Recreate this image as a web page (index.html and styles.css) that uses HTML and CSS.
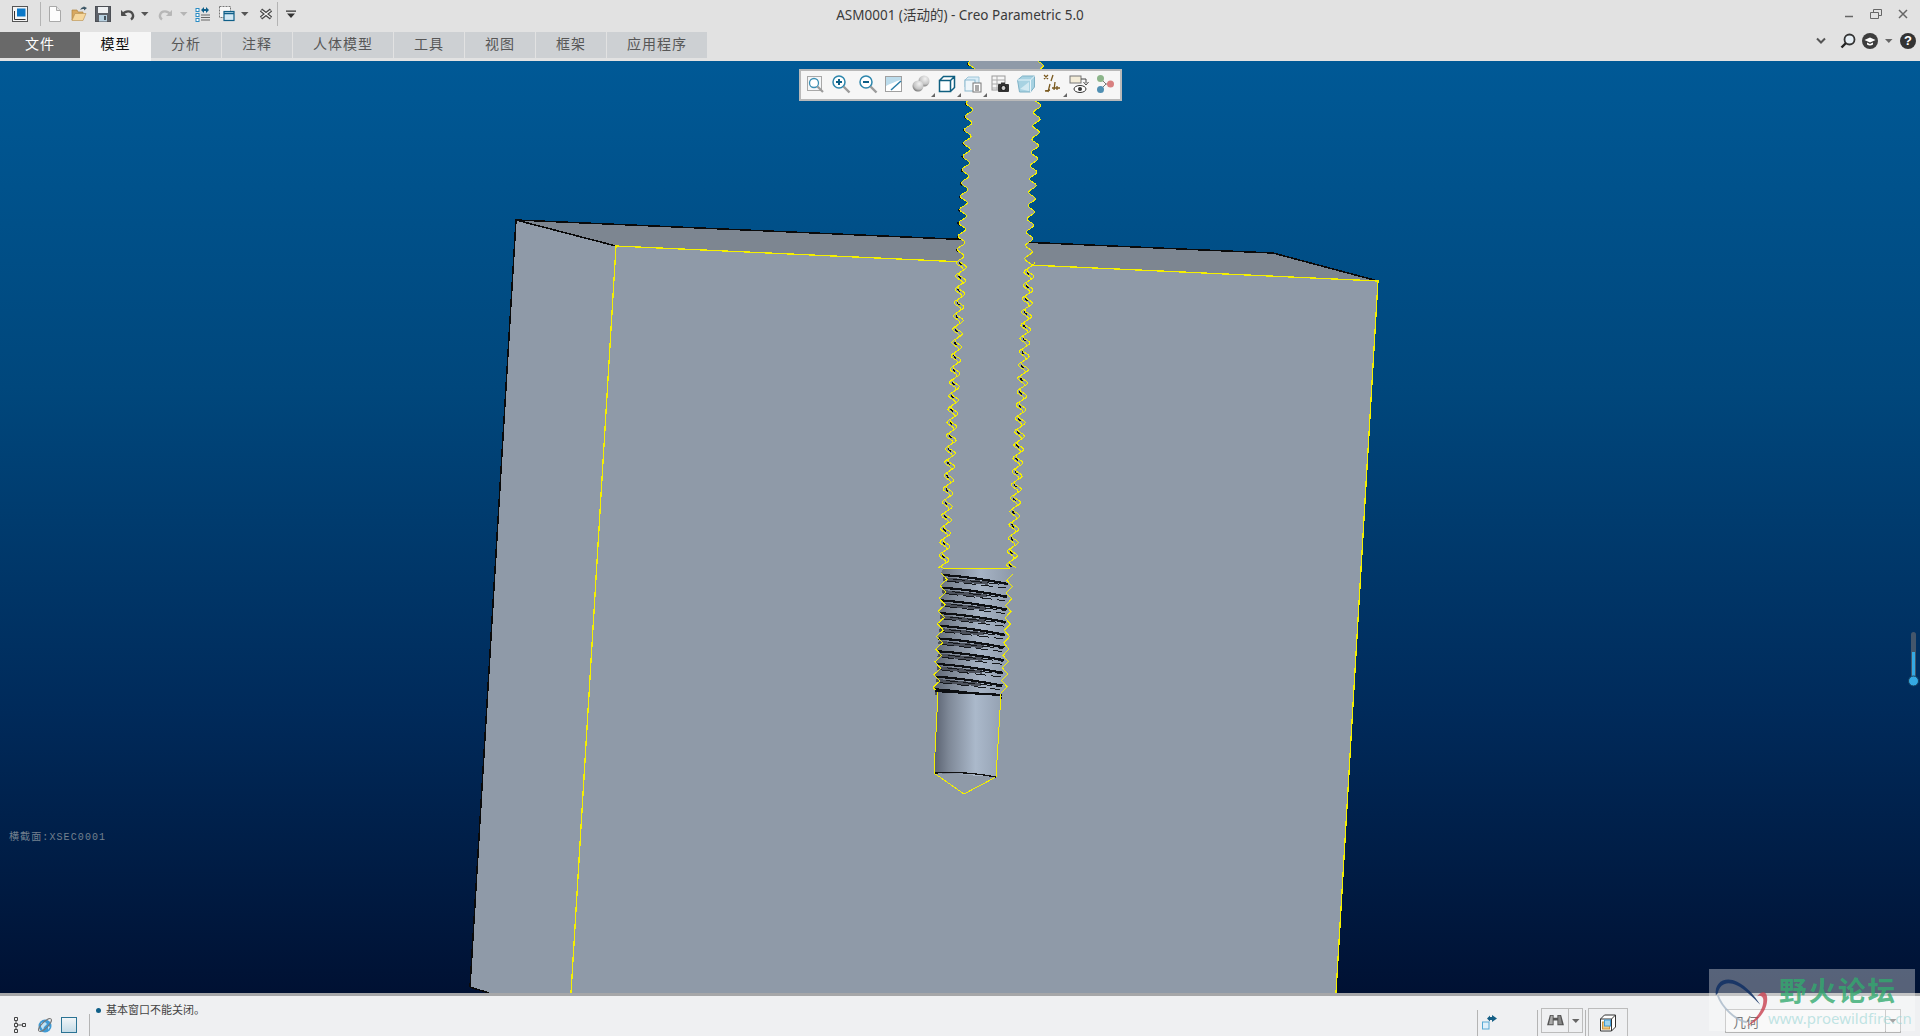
FILE: index.html
```html
<!DOCTYPE html>
<html lang="zh">
<head>
<meta charset="utf-8">
<title>ASM0001 (活动的) - Creo Parametric 5.0</title>
<link rel="stylesheet" href="styles.css">
</head>
<body>
<header class="chrome">
  <div class="titlebar">
    <div class="qat">
      <svg class="qi app" viewBox="0 0 16 16"><rect x=".5" y=".5" width="15" height="15" fill="#f4f4f4" stroke="#555"/><rect x="5" y="2.500" width="8.500" height="8" fill="#0a78c8"/><path d="M2.500 5v8.500h11" fill="none" stroke="#333" stroke-width="1"/></svg>
      <span class="sep sep-a"></span>
      <svg class="qi" viewBox="0 0 16 16"><path d="M2.500.5h7l4 4v11h-11z" fill="#fdfdfd" stroke="#a9a9a9"/><path d="M9.500.5v4h4" fill="#e4e4e4" stroke="#a9a9a9"/></svg>
      <svg class="qi" viewBox="0 0 16 16"><path d="M1 14V4h5l1 2h5v2H4z" fill="#d8a860" stroke="#b08440" stroke-width=".7"/><path d="M1 14.500l3-7h11l-3 7z" fill="#f6d79c" stroke="#c09a5c" stroke-width=".7"/><path d="M9 4c1-2 2-3 4-3l-1-1 4 2-3 2.500V3c-1.500 0-3 .2-4 1z" fill="#3d5666"/></svg>
      <svg class="qi" viewBox="0 0 16 16"><rect x=".5" y=".5" width="15" height="15" fill="#5d6168" stroke="#4c4f55"/><rect x="3" y="1" width="10" height="6" fill="#eef0f2"/><rect x="4" y="9" width="8" height="6.500" fill="#b7d0e0"/><rect x="9" y="10" width="2" height="4" fill="#44525c"/></svg>
      <svg class="qi" viewBox="0 0 16 16"><path d="M2.500 4.500v5h5" fill="#4d4d4d" stroke="#4d4d4d" stroke-width="1"/><path d="M3.500 8.500C6 4.500 12.500 4 14 9c.4 2-.5 3.500-2 4.500" fill="none" stroke="#4d4d4d" stroke-width="2.400"/></svg>
      <svg class="qa" viewBox="0 0 10 16"><path d="M1 6h7.500L4.800 10z" fill="#555"/></svg>
      <svg class="qi redo" viewBox="0 0 16 16"><path d="M13.500 4.500v5h-5" fill="#b7b7b7" stroke="#b7b7b7" stroke-width="1"/><path d="M12.500 8.500C10 4.500 3.500 4 2 9c-.4 2 .5 3.500 2 4.500" fill="none" stroke="#b7b7b7" stroke-width="2.400"/></svg>
      <svg class="qa" viewBox="0 0 10 16"><path d="M1 6h7.500L4.800 10z" fill="#b5b5b5"/></svg>
      <svg class="qi regen" viewBox="0 0 16 16"><g fill="#fff" stroke="#2b8cc4"><rect x="1" y="2.500" width="3" height="3"/><rect x="1" y="7.500" width="3" height="3"/><rect x="1" y="12.500" width="3" height="3"/></g><path d="M6 9h9M6 11.500h9M6 14h9" stroke="#666" stroke-width="1"/><path d="M6 4l3-3v2h2V1l3 3-3 3V5H9v2z" fill="#0e5f8a"/></svg>
      <svg class="qi" viewBox="0 0 16 16"><rect x=".5" y=".5" width="11" height="11" fill="#f6f6f6" stroke="#777" stroke-dasharray="2 1"/><rect x="5" y="5.500" width="10" height="9" fill="#d2e8f4" stroke="#0f5f88" stroke-width="1.200"/><path d="M5 7.500h10" stroke="#0f5f88" stroke-width="1.500"/></svg>
      <svg class="qa" viewBox="0 0 10 16"><path d="M1 6h7.500L4.800 10z" fill="#555"/></svg>
      <svg class="qi closer" viewBox="0 0 16 16"><path d="M3 4l10 8M13 4L3 12" stroke="#444" stroke-width="3.600"/><path d="M3.500 4.400l9 7.200M12.500 4.400l-9 7.200" stroke="#f4f4f4" stroke-width="1.300"/></svg>
      <span class="sep sep-b"></span>
      <svg class="qa more" viewBox="0 0 10 16"><path d="M0 4.500h10v1.200H0zM1 7.500h8L5 12z" fill="#333"/></svg>
    </div>
    <div class="title">ASM0001 (活动的) - Creo Parametric 5.0</div>
    <div class="winctl">
      <svg class="wc" viewBox="0 0 12 12"><path d="M2 8.500h8" stroke="#666" stroke-width="1.500"/></svg>
      <svg class="wc" viewBox="0 0 12 12"><path d="M.5 4.500h8v6h-8zM3.500 4.500v-3h8v6h-3" fill="none" stroke="#666"/></svg>
      <svg class="wc" viewBox="0 0 12 12"><path d="M2 2l8 8M10 2l-8 8" stroke="#666" stroke-width="1.500"/></svg>
    </div>
  </div>
  <div class="ribbonbar">
    <nav class="tabs">
      <span class="tab tab-file">文件</span>
      <span class="tab tab-active">模型</span>
      <span class="tab">分析</span>
      <span class="tab">注释</span>
      <span class="tab">人体模型</span>
      <span class="tab">工具</span>
      <span class="tab">视图</span>
      <span class="tab">框架</span>
      <span class="tab">应用程序</span>
    </nav>
    <div class="helpers">
      <svg class="chev" viewBox="0 0 10 8"><path d="M1 1.500l4 4 4-4" fill="none" stroke="#555" stroke-width="2"/></svg>
      <svg class="h16" viewBox="0 0 16 16"><circle cx="9.500" cy="6.500" r="5" fill="#e6eef4" stroke="#333" stroke-width="1.800"/><path d="M6 10l-4.500 4.500" stroke="#222" stroke-width="2.400"/></svg>
      <svg class="h16" viewBox="0 0 16 16"><circle cx="8" cy="8" r="8" fill="#3d3d3d"/><path d="M2.500 7L8 4.500 13.500 7 8 9.500z" fill="#fff"/><path d="M5 9.500v2c2 1.300 4 1.300 6 0v-2L8 11z" fill="#fff"/></svg>
      <svg class="qa" viewBox="0 0 10 16"><path d="M1 6h7.500L4.800 10z" fill="#666"/></svg>
      <span class="help">?</span>
    </div>
  </div>
</header>

<main class="viewport">
  <svg class="scene" id="scene" viewBox="0 61 1920 932" xmlns="http://www.w3.org/2000/svg">
    <defs>
      <linearGradient id="threadBody" x1="0" x2="1" y1="0" y2="0">
        <stop offset="0" stop-color="#5b6370"/><stop offset=".25" stop-color="#808a98"/><stop offset=".6" stop-color="#a6b3c4"/><stop offset="1" stop-color="#8d99a9"/>
      </linearGradient>
      <linearGradient id="cylBody" x1="0" x2="1" y1="0" y2="0">
        <stop offset="0" stop-color="#596170"/><stop offset=".22" stop-color="#7e8897"/><stop offset=".62" stop-color="#abb9cb"/><stop offset="1" stop-color="#95a2b3"/>
      </linearGradient>
    </defs>
    <g class="crisp">
      <polygon class="face" points="516,220 470,987 489,993 571,993 616,246"/>
      <polygon class="face" points="616,246 1378,281 1336,993 571,993"/>
      <polygon class="topface" points="516,220 1273,253 1378,281 616,246"/>
      <polyline class="ink" points="470,987 516,220 1273,253 1378,281"/>
      <line class="ink" x1="516" y1="220" x2="616" y2="246"/>
      <line class="ink" x1="470" y1="987" x2="489" y2="993"/>
      <polyline class="edge" points="571,993 616,246 1378,281 1336,993"/>
    </g>
    <g id="bolt" class="crisp"></g>
    <text class="seclabel" x="9" y="840">横截面:XSEC0001</text>
    <g class="slider">
      <rect class="track" x="1911" y="632" width="5" height="50" rx="2.500"/>
      <rect class="level" x="1912" y="652" width="3" height="28"/>
      <circle class="knob" cx="1913.500" cy="681" r="5"/>
    </g>
  </svg>

  <div class="viewbar">
    <svg class="vi" viewBox="0 0 20 20"><rect x="2.500" y="2.500" width="14" height="14" fill="#f4f6f8" stroke="#a8a8a8"/><circle cx="9" cy="9" r="4.500" fill="#fff" stroke="#3b8fb4" stroke-width="1.300"/><path d="M12.500 12.500l5.500 5.500" stroke="#9b9b9b" stroke-width="2.200"/></svg>
    <svg class="vi" viewBox="0 0 20 20"><circle cx="8" cy="8" r="6" fill="#fff" stroke="#2d86ac" stroke-width="1.500"/><path d="M5 8h6M8 5v6" stroke="#0d5f86" stroke-width="2"/><path d="M12.500 12.500l6 6" stroke="#9b9b9b" stroke-width="2.400"/></svg>
    <svg class="vi" viewBox="0 0 20 20"><circle cx="8" cy="8" r="6" fill="#fff" stroke="#2d86ac" stroke-width="1.500"/><path d="M5 8h6" stroke="#0d5f86" stroke-width="2"/><path d="M12.500 12.500l6 6" stroke="#9b9b9b" stroke-width="2.400"/></svg>
    <svg class="vi" viewBox="0 0 20 20"><rect x="1.500" y="2.500" width="16" height="15" fill="#fff" stroke="#a0a0a0"/><path d="M2 3h15v3C12 7 6 10 2 12z" fill="#bcdcec"/><path d="M7 16L17 7" stroke="#2a7da8" stroke-width="1.500"/></svg>
    <span class="vslot"><svg class="vi" viewBox="0 0 20 20"><defs><radialGradient id="sph" cx=".6" cy=".3" r=".8"><stop offset="0" stop-color="#f2f2f2"/><stop offset=".6" stop-color="#c4c4c4"/><stop offset="1" stop-color="#5a5a5a"/></radialGradient></defs><circle cx="13" cy="7" r="5.500" fill="url(#sph)"/><circle cx="7" cy="12" r="5.500" fill="url(#sph)"/></svg><i class="corner"></i></span>
    <span class="vslot"><svg class="vi" viewBox="0 0 20 20"><path d="M2.500 6.500h11v11h-11zM2.500 6.500l4-4h11v11l-4 4M13.500 6.500l4-4" fill="#fff" stroke="#0f5f80" stroke-width="1.500"/></svg><i class="corner"></i></span>
    <span class="vslot"><svg class="vi" viewBox="0 0 20 20"><path d="M2 6l3-3h11v10H2z" fill="#d8ecf6" stroke="#9fc6d8"/><rect x="2" y="6" width="10" height="11" fill="#eef6fa" stroke="#8bb9cf"/><rect x="10" y="9" width="8" height="9" fill="#fff" stroke="#777"/><path d="M12 12h4M12 14h4M12 16h4" stroke="#555"/></svg><i class="corner"></i></span>
    <svg class="vi" viewBox="0 0 20 20"><rect x="2" y="2" width="13" height="14" fill="#f6f6f6" stroke="#999"/><path d="M2 6h13M2 10h13M2 14h13M7 2v14" stroke="#aaa"/><rect x="8" y="10" width="11" height="8" rx="1" fill="#333"/><circle cx="13.500" cy="14" r="2.500" fill="#ccc" stroke="#111"/><rect x="11" y="8.500" width="4" height="2" fill="#333"/></svg>
    <svg class="vi" viewBox="0 0 20 20"><path d="M1.500 6l5-4h12v11l-4 5h-11z" fill="#a7d2e2" stroke="#7fb2c6"/><path d="M1.500 6h13l4-4M14.500 6v12" fill="none" stroke="#e6f4fa"/><path d="M4 15l9-7v9z" fill="#d2e9f2"/></svg>
    <span class="vslot"><svg class="vi" viewBox="0 0 20 20"><g stroke="#7a5a20" stroke-width="1.300" fill="none"><path d="M1 1l4 4M5 1L1 5M10 1L8 7M7 10l-2 8M12 8l-1 8M9 14h8M14 12v4M2 17l5-1"/></g></svg><i class="corner"></i></span>
    <svg class="vi" viewBox="0 0 20 20"><rect x="1" y="2" width="11" height="7" fill="#f3ecd8" stroke="#777"/><path d="M12 5h5v4M14.500 8l2.500 3 2.500-3" fill="none" stroke="#444"/><ellipse cx="11" cy="15" rx="6" ry="3.500" fill="#fff" stroke="#333"/><circle cx="11" cy="15" r="2" fill="#333"/></svg>
    <svg class="vi" viewBox="0 0 20 20"><path d="M6 5l5 5-5 5M11 10h5" fill="none" stroke="#777"/><circle cx="5.500" cy="4.500" r="3.500" fill="#8cb58a"/><circle cx="5.500" cy="15.500" r="3.500" fill="#4f8fb3"/><circle cx="15.500" cy="10" r="3.500" fill="#d88080"/></svg>
  </div>
</main>

<footer class="status">
  <div class="st-left">
    <svg class="st16" viewBox="0 0 16 16"><path d="M2.500 .5h3v3h-3zM2.500 6.500h3v3h-3zM2.500 12.500h3v3h-3zM10.500 6.500h3v3h-3zM4 3.500v3M4 9.500v3M5.500 8h5" fill="none" stroke="#444"/></svg>
    <svg class="st16" viewBox="0 0 16 16"><circle cx="8" cy="9" r="6.500" fill="#3f9ad4"/><path d="M4 6l4-1 2 2-3 3-1 3-2-3zM11 9l2 1-2 3z" fill="#bfe2f5"/><ellipse cx="8" cy="8" rx="8.500" ry="3" transform="rotate(-45 8 8)" fill="none" stroke="#777"/></svg>
    <svg class="st16" viewBox="0 0 16 16"><defs><linearGradient id="pane" x1="0" x2="0" y1="0" y2="1"><stop offset="0" stop-color="#f3f6f8"/><stop offset="1" stop-color="#c3dbe7"/></linearGradient></defs><rect x=".5" y=".5" width="15" height="15" fill="url(#pane)" stroke="#2b7394"/></svg>
  </div>
  <div class="message"><i class="dot"></i><span>基本窗口不能关闭。</span></div>
  <div class="st-right">
    <svg class="st16 regen-s" viewBox="0 0 16 16"><rect x=".5" y="8" width="6.500" height="7" fill="#dff0fa" stroke="#58a9d4"/><path d="M5 4.500L8 1.500V3h2V1l5 3.500L10 8V6H8v1.500z" fill="#155f86"/></svg>
    <div class="filterbox binoc">
      <span class="bcell"><svg class="st-bin" viewBox="0 0 18 16"><path d="M3 2h4v3h4V2h4l3 11h-7V8H7v5H0z" fill="#555"/><path d="M4 3h2v9H2z" fill="#aaa"/><path d="M12 3h2l2 9h-4z" fill="#888"/></svg></span>
      <span class="arrowcell"><svg class="qa" viewBox="0 0 10 16"><path d="M1 6h7.500L4.800 10z" fill="#666"/></svg></span>
    </div>
    <div class="cubebtn"><svg class="st-cube" viewBox="0 0 18 18"><path d="M1.500 5l4-4h11v12l-4 4h-11z" fill="#fff" stroke="#333"/><path d="M1.500 5h11v12M12.500 5l4-4" fill="none" stroke="#333"/><rect x="3.500" y="8" width="7" height="7" fill="#f0c77e" stroke="#c9923e"/><rect x="5.500" y="6" width="6" height="6" fill="#9fd4ef" stroke="#3f9ad4"/></svg></div>
    <div class="selectbox"><span class="selval">几何</span><span class="arrowcell selarrow"><svg class="qa" viewBox="0 0 10 16"><path d="M1 6h7.500L4.800 10z" fill="#777"/></svg></span></div>
  </div>
</footer>

<aside class="watermark">
  <svg class="wm-logo" viewBox="0 0 60 60">
    <path d="M4 24C2 10 14 4 26 10c10 5 18 14 24 24-8-8-16-16-24-20C16 9 8 12 6 22z" fill="#0f2f63" opacity=".85"/>
    <path d="M6 24c4 12 18 26 30 28" fill="none" stroke="#a8b8c8" stroke-width="2" opacity=".8"/>
    <path d="M46 26c6-8 12-6 11 4-1 12-11 22-21 26 10-8 18-18 17-28-1-4-5-4-7-2z" fill="#c8404f" opacity=".8"/>
  </svg>
  <div class="wm-cn">野火论坛</div>
  <div class="wm-url">www.proewildfire.cn</div>
</aside>
<script src="script.js"></script>
</body>
</html>
```
FILE: styles.css
```css
* { box-sizing: border-box; }
html, body { margin: 0; height: 100%; overflow: hidden; }
body {
  display: flex;
  flex-direction: column;
  height: 1036px;
  position: relative;
  font-family: "Noto Sans", "Noto Sans CJK SC", sans-serif;
  background: #e2e2e2;
}
svg { display: block; flex: none; }

/* window chrome */
.chrome { height: 61px; flex: none; background: #e2e2e2; display: flex; flex-direction: column; }
.titlebar { height: 32px; display: grid; grid-template-columns: 1fr auto 1fr; align-items: start; }
.qat { display: flex; align-items: center; gap: 8px; padding: 4px 0 0 12px; height: 24px; }
.qi { width: 16px; height: 16px; }
.qa { width: 10px; height: 16px; }
.qat .qa { margin-left: -3px; margin-right: -1px; }
.redo { margin-left: 1px; }
.regen { margin-left: -1px; }
.closer { margin-left: 1px; }
.app { margin-right: 4px; }
.sep { width: 1px; height: 24px; background: #b4b4b4; }
.sep-a { margin-right: -2px; }
.sep-b { margin-left: -5px; }
.qat .more { margin-left: 0; }
.title { font-size: 13.500px; line-height: 16px; padding-top: 7px; color: #3a3a3a; white-space: nowrap; }
.winctl { display: flex; justify-content: flex-end; gap: 15px; padding: 8px 11px 0 0; }
.wc { width: 12px; height: 12px; }

.ribbonbar { height: 26px; display: flex; justify-content: space-between; }
.tabs { display: flex; gap: 1px; align-items: stretch; }
.tab {
  padding: 0 20px;
  background: #cdd0d3;
  color: #575757;
  font-size: 14px;
  letter-spacing: 1px;
  line-height: 24px;
  white-space: nowrap;
}
.tab-file { width: 80px; background: #696969; color: #fff; margin-right: -1px; text-align: center; padding: 0; }
.tab-active { width: 71px; background: #f6f6f6; color: #111; margin-right: -1px; height: 29px; padding: 0; text-align: center; }
.helpers { display: flex; align-items: center; gap: 6px; padding: 0 4px 8px 0; }
.chev { width: 10px; height: 8px; margin-right: 8px; }
.h16 { width: 16px; height: 16px; }
.help {
  width: 16px; height: 16px; border-radius: 50%;
  background: #333; color: #fff;
  font: 700 13px/16px "Liberation Sans", sans-serif;
  text-align: center;
}

/* 3D viewport */
.viewport {
  flex: 1;
  position: relative;
  min-height: 0;
  background: linear-gradient(180deg, #005996 0%, #00477c 35%, #002a5a 70%, #001133 100%);
}
.scene { width: 1920px; height: 932px; }
.crisp { shape-rendering: crispEdges; }
.face { fill: #8f9aa8; }
.topface { fill: #7d8691; }
.ink { fill: none; stroke: #0a0a0a; stroke-width: 1.500; }
.edge { fill: none; stroke: #f4f000; stroke-width: 1.300; }
.boltfill { fill: #8f9aa8; }
.wave { fill: none; stroke: #f4f000; stroke-width: 1; }
.fleck { fill: none; stroke: #111; stroke-width: 1.300; }
.threadfill { fill: url(#threadBody); }
.cyl { fill: url(#cylBody); }
.cone { fill: #8f9aa8; }
.helix { fill: none; stroke: #0d0f12; stroke-width: 2.200; }
.helix-band { fill: none; stroke: #4d525c; stroke-width: 3.500; }
.helix-thin { fill: none; stroke: #15181c; stroke-width: 1; stroke-dasharray: 12 5; }
.seclabel { font: 10px "Liberation Mono", "Noto Sans CJK SC", monospace; letter-spacing: 1.100px; fill: #74818f; }
.track { fill: #43566b; }
.level, .knob { fill: #35a9e2; }
.knob { stroke: #16405f; stroke-width: 1; }

.viewbar {
  position: absolute;
  left: 799px;
  top: 8px;
  width: 323px;
  height: 32px;
  background: #f6f6f6;
  border: 2px solid #b9b9b9;
  display: flex;
  align-items: center;
  gap: 6.400px;
  padding: 0 4px 2px;
}
.vi { width: 20px; height: 20px; }
.vslot { position: relative; display: block; width: 20px; height: 20px; flex: none; }
.corner {
  position: absolute; right: -4px; bottom: -3px;
  width: 0; height: 0;
  border-left: 4px solid transparent;
  border-bottom: 4px solid #666;
}

/* status bar */
.status {
  height: 43px;
  flex: none;
  background: #eff0f2;
  border-top: 3px solid #a6a7a9;
  display: flex;
  align-items: flex-start;
}
.st-left {
  width: 90px;
  height: 40px;
  display: flex;
  align-items: flex-end;
  gap: 8.500px;
  padding: 0 0 3px 12px;
  position: relative;
}
.st-left::after { content: ""; position: absolute; right: 0; top: 18px; bottom: 0; width: 1px; background: #b4b4b4; }
.st16 { width: 16px; height: 16px; }
.message { display: flex; align-items: center; gap: 5px; padding: 6px 0 0 6px; font-size: 11px; line-height: 16px; color: #444; }
.dot { width: 5px; height: 5px; border-radius: 50%; background: #0f5f88; }
.st-right {
  margin-left: auto;
  display: flex;
  align-items: flex-start;
  width: 443px;
  height: 40px;
  position: relative;
  background: linear-gradient(#b4b4b4, #b4b4b4) 0 14px / 1px 100% no-repeat;
}
.regen-s { margin: 18px 0 0 5px; }
.filterbox {
  display: flex;
  margin: 12px 0 0 43px;
  width: 42px; height: 25px;
  border: 1px solid #bcbcbc;
}
.st-right::before, .st-right::after { content: ""; position: absolute; top: 14px; bottom: 0; width: 1px; background: #b4b4b4; }
.st-right::before { left: 60px; }
.st-right::after { left: 108px; }
.bcell { width: 27px; display: flex; align-items: center; justify-content: center; border-right: 1px solid #bcbcbc; }
.st-bin { width: 17px; height: 15px; }
.arrowcell { flex: 1; display: flex; align-items: center; justify-content: center; }
.cubebtn {
  margin: 12px 0 0 5px;
  width: 40px; height: 28px;
  border: 1px solid #bcbcbc;
  border-bottom: 0;
  display: flex; align-items: center; justify-content: center;
}
.st-cube { width: 18px; height: 18px; }
.selectbox {
  margin: 13px 0 0 97px;
  width: 176px; height: 24px;
  border: 1px solid #b4b4b4;
  background: #f6f6f6;
  display: flex;
}
.selval { flex: 1; padding-left: 7px; font-size: 13px; line-height: 24px; color: #333; }
.selarrow { flex: none; width: 15px; border-left: 1px solid #b4b4b4; }

/* forum watermark overlay */
.watermark {
  position: absolute;
  left: 1709px;
  top: 969px;
  width: 206px;
  height: 62px;
  background: rgba(255, 255, 255, .34);
}
.wm-logo { position: absolute; left: 2px; top: 3px; width: 60px; height: 58px; }
.wm-cn {
  position: absolute; left: 70px; top: 2px;
  font: 700 27.500px/36px "Noto Sans CJK SC", sans-serif;
  letter-spacing: 2px;
  color: rgba(50, 170, 110, .8);
  white-space: nowrap;
}
.wm-url {
  position: absolute; left: 59px; top: 37px;
  font: 400 15px/24px "Noto Sans", sans-serif;
  color: rgba(160, 215, 215, .65);
  white-space: nowrap;
}
```
FILE: script.js
```js
// Builds the threaded bolt: its wavy silhouette lines come from a formula, not from hand-placed points.
var NS = "http://www.w3.org/2000/svg";
var bolt = document.getElementById("bolt");

function add(tag, cls, attrs) {
  var el = document.createElementNS(NS, tag);
  el.setAttribute("class", cls);
  for (var k in attrs) el.setAttribute(k, attrs[k]);
  bolt.appendChild(el);
  return el;
}
function edgeX(base, y) { return base - (y - 62) * 0.0593; }
function wavePts(base, y0, y1, dx, phase) {
  var pts = [];
  for (var y = y0; y <= y1; y += 1.5) {
    var s = Math.sin((y + phase) * 2 * Math.PI / 13.3);
    pts.push([edgeX(base, y) + dx + 3.6 * s, y]);
  }
  return pts;
}
function str(p) { return p.map(function (q) { return q[0].toFixed(1) + "," + q[1].toFixed(1); }).join(" "); }

var L = 972, R = 1040, TOP = 61, DBL = 262, END = 568;

// shaft fill
var fillPts = wavePts(L, TOP, END, 0, 0).concat(wavePts(R, TOP, END, 0, 4).reverse());
add("polygon", "boltfill", { points: str(fillPts) });

// dark flecks on the concave side of each wave
function flecks(base, phase, dx, y0, y1) {
  var n = Math.floor((y0 + phase) / 13.3);
  for (var i = n; i * 13.3 - phase < y1; i++) {
    var yc = i * 13.3 - phase + 9.5;
    if (yc < y0 || yc > y1) continue;
    add("polyline", "fleck", { points: str(wavePts(base, yc, yc + 4, dx, phase)) });
  }
}
flecks(L, 0, -1, TOP, DBL);
flecks(L, 0, 3, DBL, END);
flecks(R, 4, 3, DBL, END);

// silhouettes: single above the block's top edge, doubled below it
add("polyline", "wave", { points: str(wavePts(L, TOP, END, 0, 0)) });
add("polyline", "wave", { points: str(wavePts(R, TOP, END, 0, 4)) });
add("polyline", "wave", { points: str(wavePts(L, DBL, END, 3, 2)) });
add("polyline", "wave", { points: str(wavePts(R, DBL, END, 3, 6)) });

// threaded section
var P = 12.7, N = 10, TY = 570;
var left = [], right = [];
for (var i = 0; i <= N; i++) {
  var yl = TY + 3 + i * P, yr = TY + 4 + i * P * 0.985;
  var lo = 941 - (yl - 573) * 0.07, ro = 1013 - (yr - 573) * 0.052;
  left.push([lo, yl]);
  if (i < N) left.push([lo + 6, yl + P / 2]);
  right.push([ro, yr]);
  if (i < N) right.push([ro - 6, yr + P / 2]);
}
left = left.slice(0, -1); right = right.slice(0, -1);
var thread = [[944, 568]].concat(left).concat([[938, 692], [1001, 694]]).concat(right.slice().reverse()).concat([[1008, 569]]);
add("polygon", "threadfill", { points: str(thread) });

for (var h = 0; h < N; h++) {
  var y = TY + 5 + h * P;
  var xa = 943 - h * 0.9, xb = 1008 - h * 0.7;
  add("path", "helix-band", { d: "M" + xa + " " + (y + 4) + "L" + (xa + 45) + " " + (y + 8) });
  add("path", "helix", { d: "M" + xa + " " + y + "Q" + (xa + 30) + " " + (y + 2) + " " + xb + " " + (y + 9) });
  add("path", "helix-thin", { d: "M" + (xa + 4) + " " + (y + 6) + "L" + (xb - 2) + " " + (y + 13) });
  add("path", "helix-thin", { d: "M" + (xa + 10) + " " + (y + 4) + "L" + (xb - 1) + " " + (y + 10) });
}
add("polyline", "wave", { points: str(left) });
add("polyline", "wave", { points: str(right) });
add("line", "wave", { x1: 942, y1: 568, x2: 1010, y2: 569 });

// plain cylinder and cone tip
add("polygon", "cone", { points: "934,773 996,777 964,794" });
add("polygon", "cyl", { points: "938,692 1001,694 996,777 934,773" });
add("path", "helix", { d: "M935 691L1002 695" });
add("polyline", "wave", { points: "938,692 934,773 964,794 996,777 1001,694" });
add("path", "fleck", { d: "M935 773Q965 771 996 777" });
```
